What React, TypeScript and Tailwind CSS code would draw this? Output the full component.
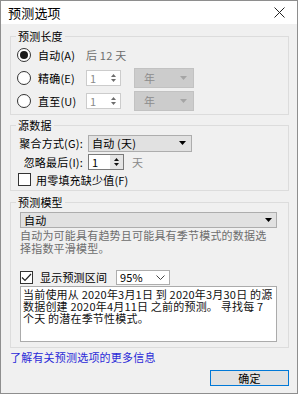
import { ReactNode } from "react";

const DownTri = ({ color = "#000" }: { color?: string }) => (
   <svg width="7" height="4" viewBox="0 0 7 4" className="shrink-0">
      <path d="M0 0h7L3.5 4z" fill={color} />
   </svg>
);

const SpinArrows = ({ color }: { color: string }) => (
   <svg width="5" height="10" viewBox="0 0 5 10" className="shrink-0">
      <path d="M0 4L2.5 1L5 4z" fill={color} />
      <path d="M0 6L2.5 9L5 6z" fill={color} />
   </svg>
);

function Radio({ checked }: { checked?: boolean }) {
   return (
      <span className="flex items-center justify-center size-[14px] rounded-full border border-[#333] bg-white shrink-0">
         {checked && <span className="size-[8px] rounded-full bg-[#1a1a1a]" />}
      </span>
   );
}

function Checkbox({ checked }: { checked?: boolean }) {
   return (
      <span className="flex items-center justify-center size-[13px] border border-[#333] bg-white shrink-0">
         {checked && (
            <svg width="11" height="9" viewBox="0 0 11 9">
               <path d="M1 4.5L4 7.5L10 1" fill="none" stroke="#222" strokeWidth="1.2" />
            </svg>
         )}
      </span>
   );
}

function Group({ title, className, children }: { title: string; className?: string; children: ReactNode }) {
   return (
      <fieldset className={`border border-[#dcdcdc] ${className ?? ""}`}>
         <legend className="ml-[5px] px-[2px] leading-[14px]">{title}</legend>
         {children}
      </fieldset>
   );
}

function DisabledRow({ label }: { label: string }) {
   return (
      <div className="flex items-center h-[23px]">
         <span className="ml-[6px]">
            <Radio />
         </span>
         <span className="ml-[7px] w-[48px]">{label}</span>
         <div className="flex items-center justify-between w-[35px] h-[16px] border border-[#cccccc] bg-white pl-[3px] pr-[4px] text-[#8a8a8a]">
            <span>1</span>
            <SpinArrows color="#6d6d6d" />
         </div>
         <div className="ml-[13px] flex items-center justify-between w-[60px] h-[20px] border border-[#c2c2c2] bg-[#cccccc] pl-[9px] pr-[6px] text-[#8d8d8d]">
            <span>年</span>
            <DownTri color="#a5a5a5" />
         </div>
      </div>
   );
}

export default function App() {
   return (
      <div className="w-[298px] h-[394px] border border-[#8e8e8e] bg-[#f0f0f0] flex flex-col text-[11px] leading-[14px] tracking-[0.2px] text-black font-['Noto_Sans_CJK_SC','Noto_Sans',sans-serif]">
         <div className="h-[23px] shrink-0 bg-white flex items-center justify-between pl-[7px] pr-[12px]">
            <span className="text-[13px] leading-[16px]">预测选项</span>
            <svg width="11" height="11" viewBox="0 0 11 11">
               <path d="M0.5 0.5L10.5 10.5M10.5 0.5L0.5 10.5" stroke="#222" strokeWidth="1" />
            </svg>
         </div>

         <div className="flex flex-col pl-[9px] pr-[8px]">
            <Group title="预测长度" className="mt-[5px] pb-[2px]">
               <div className="flex items-center h-[23px]">
                  <span className="ml-[6px]">
                     <Radio checked />
                  </span>
                  <span className="ml-[7px] w-[48px]">自动(A)</span>
                  <span className="text-[#6d6d6d]">后 12 天</span>
               </div>
               <DisabledRow label="精确(E)" />
               <DisabledRow label="直至(U)" />
            </Group>

            <Group title="源数据" className="mt-[3px] pt-[1px] pb-[2px]">
               <div className="flex items-center h-[20px]">
                  <span className="w-[72px] text-right">聚合方式(G):</span>
                  <div className="ml-[5px] flex items-center justify-between w-[104px] h-[17px] border border-[#adadad] bg-[#e1e1e1] pl-[3px] pr-[5px]">
                     <span>自动 (天)</span>
                     <DownTri />
                  </div>
               </div>
               <div className="flex items-center h-[18px]">
                  <span className="w-[72px] text-right">忽略最后(I):</span>
                  <div className="ml-[5px] flex items-stretch w-[36px] h-[16px] border border-[#7a7a7a] bg-white">
                     <span className="flex-1 pl-[3px] leading-[14px]">1</span>
                     <span className="flex items-center justify-center w-[13px] bg-[#e5e5e5]">
                        <SpinArrows color="#111" />
                     </span>
                  </div>
                  <span className="ml-[8px] text-[#8a8a8a]">天</span>
               </div>
               <div className="flex items-center h-[17px]">
                  <span className="ml-[7px]">
                     <Checkbox />
                  </span>
                  <span className="ml-[5px]">用零填充缺少值(F)</span>
               </div>
            </Group>

            <Group title="预测模型" className="mt-[4px] pb-[5px]">
               <div className="mt-[3px] ml-[9px] flex items-center justify-between w-[257px] h-[16px] border border-[#adadad] bg-[#e1e1e1] pl-[3px] pr-[4px]">
                  <span>自动</span>
                  <DownTri />
               </div>
               <p className="mt-[1px] ml-[9px] w-[252px] leading-[13px] text-[#6d6d6d]">
                  自动为可能具有趋势且可能具有季节模式的数据选择指数平滑模型。
               </p>
               <div className="mt-[14px] ml-[9px] flex items-center h-[16px]">
                  <Checkbox checked />
                  <span className="ml-[7px] w-[76px]">显示预测区间</span>
                  <div className="flex items-center justify-between w-[54px] h-[15px] border border-[#adadad] bg-white pl-[3px] pr-[4px]">
                     <span>95%</span>
                     <svg width="9" height="5" viewBox="0 0 9 5">
                        <path d="M0.5 0.5L4.5 4.5L8.5 0.5" fill="none" stroke="#444" strokeWidth="1" />
                     </svg>
                  </div>
               </div>
               <p className="mt-[1px] ml-[9px] w-[257px] h-[56px] border border-[#ababab] bg-white pt-[1px] pl-[2px] pr-[2px] leading-[12px] text-[#111]">
                  当前使用从 2020年3月1日 到 2020年3月30日 的源数据创建 2020年4月11日 之前的预测。 寻找每 7 个天 的潜在季节性模式。
               </p>
            </Group>

            <span className="mt-[2px] text-[#2a2ad8]">了解有关预测选项的更多信息</span>

            <button className="mt-[6px] self-end w-[79px] h-[16px] border border-[#0078d7] bg-[#e1e1e1] flex items-center justify-center leading-[14px]">
               确定
            </button>
         </div>
      </div>
   );
}
